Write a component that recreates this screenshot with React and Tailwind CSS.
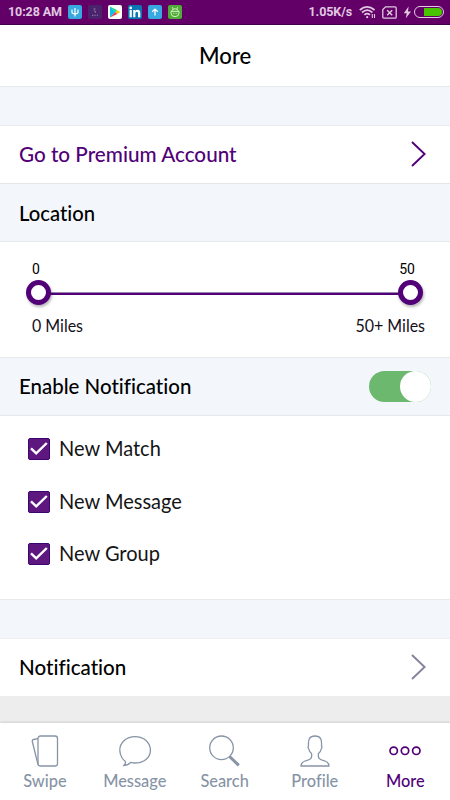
import { useState } from 'react';

const PURPLE = '#520078';

const Chevron = ({ color }) => (
  <svg width="17" height="28" viewBox="0 0 17 28" fill="none" stroke={color} strokeWidth="1.9">
    <path d="M2 2 L14.6 14 L2 26" />
  </svg>
);

const AppBadge = ({ className, children }) => (
  <span className={`flex h-[14px] w-[14px] items-center justify-center overflow-hidden rounded-[2px] ${className}`}>
    <svg width="14" height="14" viewBox="0 0 14 14">
      {children}
    </svg>
  </span>
);

const StatusBar = () => (
  <div className="flex h-[25px] shrink-0 items-center border-b border-[#3c0048] bg-[#630068] pl-2 pr-[6px] font-['Roboto',sans-serif] text-[12.5px] font-bold text-[#e0c8e1]">
    <span className="w-[60px] whitespace-nowrap tracking-[-0.1px]">10:28 AM</span>
    <div className="flex gap-[6px]">
      <AppBadge className="bg-[#38a8e0]">
        <g fill="none" stroke="#fff" strokeWidth="1.2">
          <path d="M7 3v8.4M4 4.6v2.6q0 1.5 3 1.7q3-.2 3-1.7V4.6" />
        </g>
      </AppBadge>
      <AppBadge className="bg-[#4b236d]">
        <g fill="none" stroke="#9a86b4" strokeWidth=".9">
          <path d="M5.5 4h2M5.8 5.8q2.4.2 1.6 2M4 10.3h1.5M6.5 10.3h1.2M8.8 10.3h1.2" />
        </g>
      </AppBadge>
      <AppBadge className="bg-white">
        <path d="M2 1.5 L7.5 7 L2 12.6z" fill="#10bfe8" />
        <path d="M2 1.5 L9.3 5.2 L7.5 7z" fill="#16dc82" />
        <path d="M2 12.6 L9.3 8.9 L7.5 7z" fill="#f03748" />
        <path d="M9.3 5.2 L12.2 7 L9.3 8.9 L7.5 7z" fill="#fdc60a" />
      </AppBadge>
      <AppBadge className="bg-[#0a77b5]">
        <g fill="#fff">
          <circle cx="2.7" cy="2.9" r="1.3" />
          <path d="M1.6 5h2.2v7.2H1.6zM5.2 5h2.1v1q.7-1.2 2.2-1.2q2.8 0 2.8 3.2v4.2H10V8.3q0-1.5-1.2-1.5q-1.4 0-1.4 1.6v3.8H5.2z" />
        </g>
      </AppBadge>
      <AppBadge className="bg-[#38a8e0]">
        <path d="M7 10.5V4.5M4.2 6.8L7 4.1l2.8 2.7" fill="none" stroke="#fff" strokeWidth="1.3" />
      </AppBadge>
      <AppBadge className="bg-[#50ac36]">
        <g fill="none" stroke="#d4efc9" strokeWidth="1">
          <path d="M3 6.4h8v1.8q0 3.4-4 3.4t-4-3.4zM3.8 6.2q.3-2.4 3.2-2.4t3.2 2.4M4.2 2.2l1 1.8M9.8 2.2l-1 1.8M5.3 8.4h1M7.7 8.4h1" />
        </g>
      </AppBadge>
    </div>
    <span className="ml-auto mr-[7px] whitespace-nowrap tracking-[-0.1px]">1.05K/s</span>
    <svg width="17" height="14" viewBox="0 0 17 14" fill="none" stroke="#e0c8e1" strokeWidth="1.7">
      <path d="M.8 5q7.2-6.2 14.8 0M3 7.5q5.3-4.6 10.4 0M5.4 9.9q2.8-2.4 5.6 0" />
      <circle cx="8.2" cy="12.2" r="1.1" fill="#e0c8e1" stroke="none" />
      <path d="M13.3 9v4M15.5 9v4" strokeWidth="1.1" />
    </svg>
    <svg className="ml-[6px]" width="15" height="13" viewBox="0 0 15 13" fill="none" stroke="#e0c8e1">
      <path d="M3.6.8H13q1.2 0 1.2 1.2v9q0 1.2-1.2 1.2H2Q.8 12.2.8 11V3.6z" strokeWidth="1.3" />
      <path d="M5.2 4.2l5 5M10.2 4.2L5.2 9.2" strokeWidth="1.5" />
    </svg>
    <svg className="ml-[6px]" width="9" height="13" viewBox="0 0 9 13" fill="#e0c8e1">
      <path d="M5.6.5L.8 7.2h2.9L2.9 12.3L8 5.5H5z" />
    </svg>
    <span className="ml-[2px] flex h-[12px] w-[30px] justify-end rounded-full border border-[#e0c8e1] p-px">
      <span className="w-[18px] rounded-r-full bg-[#48c500]" />
    </span>
  </div>
);

const SliderThumb = () => (
  <span className="z-10 h-[25px] w-[25px] shrink-0 rounded-full border-[5px] border-[#520078] bg-white shadow-[1px_2px_3px_rgba(0,0,0,0.3)]" />
);

const OPTIONS = ['New Match', 'New Message', 'New Group'];

const CheckRow = ({ label, checked, onToggle }) => (
  <button type="button" onClick={onToggle} className="flex h-[22px] items-center gap-[9px] text-left">
    <span className="flex h-[22px] w-[22px] shrink-0 items-center justify-center rounded-[2px] border border-[#3d0570] bg-[#5f1780]">
      {checked && (
        <svg width="18" height="14" viewBox="0 0 18 14" fill="none" stroke="#fff" strokeWidth="2.4">
          <path d="M1 6.4l5.2 5L16.8 1" />
        </svg>
      )}
    </span>
    <span className="mb-[2px] origin-left scale-x-[0.91] whitespace-nowrap text-[22px] leading-none text-[#151515]">{label}</span>
  </button>
);

const TABS = [
  {
    name: 'Swipe',
    icon: (
      <>
        <rect x="9" y="1" width="19.5" height="30" rx="2.5" />
        <path d="M9 3.7L4.5 4.5Q3 4.9 3.3 6.5L9 29.5" />
      </>
    ),
  },
  {
    name: 'Message',
    icon: <path d="M6.2 26.2C4.8 25.3.8 21.5.8 15.2C.8 7.5 7.5 1.6 16.1 1.6S31.4 7.5 31.4 15.2S24.7 28 16.1 28Q13.5 28 11.5 27.4Q9.3 30.3 5 30.5Q7 28.5 6.2 26.2z" />,
  },
  {
    name: 'Search',
    icon: (
      <>
        <circle cx="12.5" cy="12.8" r="11.8" />
        <path d="M20.5 21.5L29.8 30.3" strokeWidth="3" />
      </>
    ),
  },
  {
    name: 'Profile',
    icon: <path d="M16 1C10.5 1 9 4 9.5 11Q8.500 12 9.8 14Q10.3 17 12.5 18.5C13.5 24 11 24.5 6 26Q2 27.5 2 31H30Q30 27.5 26 26C21 24.5 18.5 24 19.5 18.5Q21.7 17 22.2 14Q23.5 12 22.5 11C23 4 21.5 1 16 1z" />,
  },
  {
    name: 'More',
    icon: (
      <g strokeWidth="1.7">
        <circle cx="4.7" cy="15.8" r="3.7" />
        <circle cx="16" cy="15.8" r="3.7" />
        <circle cx="27.3" cy="15.8" r="3.7" />
      </g>
    ),
  },
];

const App = () => {
  const [enabled, setEnabled] = useState(true);
  const [checks, setChecks] = useState([true, true, true]);
  const [tab, setTab] = useState('More');

  const toggle = (index) => {
    setChecks(checks.map((value, i) => (i === index ? !value : value)));
  };

  return (
    <div className="flex h-[800px] w-[450px] flex-col overflow-hidden bg-[#ededed] font-['Lato',sans-serif] text-black [font-variant-ligatures:none]">
      <StatusBar />

      <header className="flex h-[62px] shrink-0 items-center justify-center border-b border-[#e6e8ea] bg-white">
        <h1 className="scale-x-[0.96] text-[23px] font-medium">More</h1>
      </header>
      <div className="h-[39px] shrink-0 border-b border-[#e9ebed] bg-[#f3f7fb]" />

      <button type="button" className="flex h-[58px] shrink-0 items-center justify-between border-b border-[#e4e7ea] bg-white pl-[19px] pr-[23px] text-[#520078]">
        <span className="mb-[2px] origin-left scale-x-[0.94] whitespace-nowrap text-[22px] font-medium">Go to Premium Account</span>
        <span className="mb-[2px]">
          <Chevron color={PURPLE} />
        </span>
      </button>

      <div className="flex h-[58px] shrink-0 items-center border-b border-[#e6eaed] bg-[#f3f7fb] pl-[19px]">
        <h2 className="mb-px origin-left scale-x-[0.92] text-[22px] font-medium">Location</h2>
      </div>

      <section className="flex h-[116px] shrink-0 flex-col border-b border-[#e6eaed] bg-white pl-[26px] pr-[27px] pt-[17px]">
        <div className="flex justify-between pl-[6px] pr-[8px] font-['Roboto',sans-serif] text-[14px] leading-5">
          <span>0</span>
          <span>50</span>
        </div>
        <div className="mt-px flex items-center">
          <SliderThumb />
          <span className="-mx-1 mt-px h-[3px] flex-1 border-t border-[#9a86ae] bg-[#520078]" />
          <SliderThumb />
        </div>
        <div className="-mr-[2px] mt-[11px] flex justify-between pl-[6px] text-[17px] leading-5 text-[#15101c]">
          <span className="origin-left scale-x-[0.94]">0 Miles</span>
          <span className="origin-right scale-x-[0.94]">50+ Miles</span>
        </div>
      </section>

      <div className="flex h-[58px] shrink-0 items-center justify-between border-b border-[#e4e9ed] bg-[#f3f7fb] pl-[19px] pr-[19px]">
        <h2 className="mb-[2px] origin-left scale-x-[0.93] text-[22px] font-medium">Enable Notification</h2>
        <button
          type="button"
          onClick={() => setEnabled(!enabled)}
          className={`flex h-[31px] w-[62px] rounded-full ${enabled ? 'justify-end bg-[#6bb86e]' : 'justify-start bg-gray-300'}`}
        >
          <span className="h-[31px] w-[31px] rounded-full bg-white" />
        </button>
      </div>

      <section className="flex h-[184px] shrink-0 flex-col gap-[30.5px] border-b border-[#e6e8ea] bg-white pl-[28px] pt-[22px]">
        {OPTIONS.map((label, i) => (
          <CheckRow key={label} label={label} checked={checks[i]} onToggle={() => toggle(i)} />
        ))}
      </section>
      <div className="h-[39px] shrink-0 border-b border-[#eef0f2] bg-[#f3f7fb]" />

      <button type="button" className="flex h-[57px] shrink-0 items-center justify-between bg-white pl-[19px] pr-[23px]">
        <span className="mb-[2px] origin-left scale-x-[0.935] text-[22px] font-medium">Notification</span>
        <span className="mb-px">
          <Chevron color="#85829a" />
        </span>
      </button>

      <nav className="mt-auto grid h-[77px] shrink-0 grid-cols-5 bg-white shadow-[0_-1px_2px_rgba(0,0,0,0.12)]">
        {TABS.map(({ name, icon }) => (
          <button
            key={name}
            type="button"
            onClick={() => setTab(name)}
            className={`flex flex-col items-center pt-[12px] ${tab === name ? 'text-[#520078]' : 'text-[#8794a6]'}`}
          >
            <svg width="32" height="32" viewBox="0 0 32 32" fill="none" stroke="currentColor" strokeWidth="1.3">
              {icon}
            </svg>
            <span className="mt-[2px] scale-x-[0.91] text-[18px] font-medium leading-[22px]">{name}</span>
          </button>
        ))}
      </nav>
    </div>
  );
};

export default App;
